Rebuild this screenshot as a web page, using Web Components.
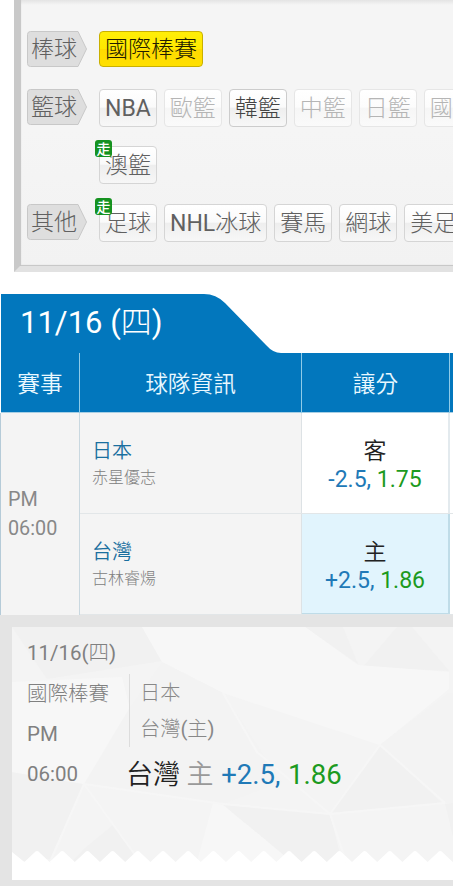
<!DOCTYPE html>
<html lang="zh-Hant">
<head>
<meta charset="utf-8">
<meta name="viewport" content="width=device-width, initial-scale=1">
<title>國際棒賽</title>
<style>
    html, body {
        margin: 0;
        background: #fff;
    }
    body {
        width: 453px;
        height: 886px;
        overflow: hidden;
        font-family: Roboto, "Noto Sans CJK TC", sans-serif;
        color: #777;
    }
    b {
        font-weight: 400;
    }
</style>
</head>
<body>
<sport-panel>
    <sport-row label="棒球">
        <sport-chip active>國際棒賽</sport-chip>
    </sport-row>
    <sport-row label="籃球">
        <sport-chip><b>NBA</b></sport-chip>
        <sport-chip disabled>歐籃</sport-chip>
        <sport-chip dark>韓籃</sport-chip>
        <sport-chip disabled>中籃</sport-chip>
        <sport-chip disabled>日籃</sport-chip>
        <sport-chip disabled>國籃</sport-chip>
    </sport-row>
    <sport-row>
        <sport-chip live>澳籃</sport-chip>
    </sport-row>
    <sport-row label="其他">
        <sport-chip live>足球</sport-chip>
        <sport-chip><b>NHL</b>冰球</sport-chip>
        <sport-chip>賽馬</sport-chip>
        <sport-chip>網球</sport-chip>
        <sport-chip>美足</sport-chip>
    </sport-row>
</sport-panel>

<odds-table>
    <span slot="day"><b>11/16 (</b>四<b>)</b></span>
    <span slot="time">PM</span>
    <span slot="time">06:00</span>
    <team-row team="日本" pitcher="赤星優志" side="客" spread="-2.5," odds="1.75"></team-row>
    <team-row team="台灣" pitcher="古林睿煬" side="主" spread="+2.5," odds="1.86" picked></team-row>
</odds-table>

<bet-slip>
    <span slot="date"><b>11/16(</b>四<b>)</b></span>
    <span slot="league">國際棒賽</span>
    <span slot="half"><b>PM</b></span>
    <span slot="hour"><b>06:00</b></span>
    <span slot="away">日本</span>
    <span slot="home">台灣<b>(</b>主<b>)</b></span>
    <bet-pick slot="pick" team="台灣" side="主" spread="+2.5," odds="1.86"></bet-pick>
</bet-slip>

<template id="sport-panel">
    <style>
        :host {
            display: block;
            box-sizing: border-box;
            width: 439px;
            height: 272px;
            margin-left: 14px;
            padding: 31px 0 0 7px;
            overflow: hidden;
            border: 6px solid #c9c9c9;
            border-top: 0;
            border-right: 0;
            border-bottom-color: #e2e2e2;
            background: linear-gradient(#e4e4e4, #f5f5f5 5px, #f5f5f5 130px, #f2f2f2);
            box-shadow: inset 1px -1px 1px #c4c4c4;
        }
    </style>
    <slot></slot>
</template>

<template id="sport-row">
    <style>
        :host {
            display: flex;
            height: 57.7px;
        }
        .label {
            flex: none;
            width: 60px;
            height: 36px;
            margin-right: 12px;
        }
        .tag {
            display: grid;
        }
        .tag > * {
            grid-area: 1 / 1;
        }
        .tag span {
            padding-left: 4px;
            font-size: 23px;
            line-height: 38px;
            font-weight: 300;
            color: #606060;
        }
        .chips {
            display: flex;
            gap: 7px;
        }
    </style>
    <div class="label"></div>
    <div class="chips"><slot></slot></div>
</template>

<template id="sport-chip">
    <style>
        :host {
            display: block;
            position: relative;
            flex: none;
            box-sizing: border-box;
            height: 38px;
            padding: 0 5px;
            border: 1px solid #d5d5d5;
            border-radius: 4px;
            background: linear-gradient(#fff, #fafafa 48%, #eee 50%, #f7f7f7);
            font-size: 23px;
            line-height: 38px;
            font-weight: 300;
            color: #606060;
            white-space: nowrap;
        }
        :host([dark]) {
            border-color: #ccc;
            color: #444;
        }
        :host([disabled]) {
            border-color: #e6e6e6;
            background: linear-gradient(#fff, #fcfcfc 48%, #f6f6f6 50%, #fafafa);
            color: #b5b5b5;
        }
        :host([active]) {
            height: 36px;
            border-color: #c9b000;
            line-height: 36px;
            background: linear-gradient(#ffee08, #ffe800 49%, #ffda00 51%, #ffe000);
            color: #221c00;
        }
        i {
            display: none;
            position: absolute;
            left: -5px;
            top: -7px;
            width: 17px;
            height: 17px;
            border-radius: 3px;
            background: #159220;
            color: #fff;
            font: 500 14px/17px "Noto Sans CJK TC", sans-serif;
            text-align: center;
        }
        :host([live]) i {
            display: block;
        }
    </style>
    <slot></slot><i></i>
</template>

<template id="odds-table">
    <style>
        :host {
            display: block;
            width: 452px;
            margin: 22px 0 0 1px;
        }
        .tab {
            display: grid;
            height: 59px;
        }
        .tab > * {
            grid-area: 1 / 1;
        }
        .day {
            padding-left: 19px;
            color: #fff;
            font-size: 31px;
            line-height: 57px;
            font-weight: 300;
        }
        .head {
            display: grid;
            grid-template-columns: 79px 222px 148px 1fr;
            height: 59px;
            background: #0277bd;
            border-bottom: 1px solid #a8cfe4;
            color: #e9f8ff;
            font-size: 22.7px;
            line-height: 64px;
            text-align: center;
        }
        .head b {
            font-weight: 350;
            border-right: 1px solid #8fcbe8;
        }
        .body {
            display: flex;
            height: 202px;
        }
        .time {
            display: flex;
            flex-direction: column;
            justify-content: center;
            box-sizing: border-box;
            width: 79px;
            padding-left: 7px;
            border-right: 1px solid #c9d8e0;
            background: #f4f4f4;
            box-shadow: -1px 0 #b5cbd8;
            color: #888;
            font-size: 19.8px;
            line-height: 29px;
        }
        .rows {
            flex: 1;
        }
    </style>
    <div class="tab">
        <svg width="300" height="59"><path d="M0 0H203Q215 0 224 9L265 51Q272 59 280 59H0Z" fill="#0277bd"/></svg>
        <div class="day"><slot name="day"></slot></div>
    </div>
    <div class="head"><b>賽事</b><b>球隊資訊</b><b>讓分</b><span></span></div>
    <div class="body">
        <div class="time"><slot name="time"></slot></div>
        <div class="rows"><slot></slot></div>
    </div>
</template>

<template id="team-row">
    <style>
        :host {
            display: flex;
            box-sizing: border-box;
            height: 101px;
            border-bottom: 1px solid #e2e6e8;
        }
        .team {
            box-sizing: border-box;
            width: 222px;
            padding: 23px 0 0 12px;
            border-right: 1px solid #dde2e5;
            background: #f4f4f4;
            font-weight: 350;
        }
        .name {
            color: #1a6f9f;
            font-size: 20px;
            line-height: 30px;
        }
        .pitcher {
            color: #808080;
            font-size: 16px;
            line-height: 24px;
            font-weight: 300;
        }
        .odds {
            box-sizing: border-box;
            width: 148px;
            padding-top: 25px;
            border-right: 2px solid #e3eaee;
            background: #fff;
            font-size: 23px;
            line-height: 28px;
            text-align: center;
        }
        :host([picked]) .odds {
            border-right-color: #bfdce8;
            border-bottom: 1px solid #bfdce8;
            background: #e1f4fd;
        }
        .side {
            color: #222;
            font-weight: 350;
        }
        .spread {
            color: #2079b7;
        }
        .price {
            color: #1c9a20;
        }
    </style>
    <div class="team"><div class="name"></div><div class="pitcher"></div></div>
    <div class="odds">
        <div class="side"></div>
        <div><span class="spread"></span> <span class="price"></span></div>
    </div>
</template>

<template id="bet-slip">
    <style>
        :host {
            display: block;
            box-sizing: border-box;
            width: 453px;
            height: 271px;
            padding: 12px 0 6px 12px;
            overflow: hidden;
            background: #e4e4e4;
        }
        .paper {
            display: grid;
            grid-template-columns: 441px;
            height: 253px;
            background: #fff;
        }
        .paper > * {
            grid-area: 1 / 1;
        }
        svg {
            width: 441px;
            height: 253px;
        }
        .text {
            padding: 11px 0 0 15px;
            color: #808080;
            font-size: 20.5px;
            font-weight: 300;
        }
        .date {
            height: 36px;
            line-height: 30px;
        }
        .cols {
            display: flex;
            height: 80px;
        }
        .left {
            box-sizing: border-box;
            width: 103px;
            height: 73px;
            border-right: 1px solid #dcdcdc;
            line-height: 40px;
        }
        .left ::slotted(span) {
            display: block;
        }
        .teams {
            padding: 1px 0 0 10px;
            color: #888;
            font-size: 20.2px;
            line-height: 36px;
        }
        .teams ::slotted(span) {
            display: block;
        }
        .last {
            display: flex;
            line-height: 40px;
        }
        .hour {
            width: 99px;
        }
    </style>
    <div class="paper">
        <svg>
            <rect width="441" height="235" fill="#f4f4f4"/>
            <g fill="#f1f1f1">
                <path d="M0 0H130L150 34L35 52Z"/>
                <path d="M293 0H331L346 37Z"/>
                <path d="M351 40L385 0H400L437 44Z"/>
                <path d="M0 145L72 157L38 232L0 235Z"/>
                <path d="M211 178L318 187L330 235H280Z"/>
                <path d="M318 186L368 118L430 176Z"/>
                <path d="M72 222L101 198L125 232V235H60Z"/>
                <path d="M433 177L441 176V210Z"/>
            </g>
            <g fill="#f7f7f7">
                <path d="M130 0H293L346 38L437 45V62L368 118L211 66L150 35Z"/>
                <path d="M0 55L110 50L120 90L72 157L0 145Z"/>
                <path d="M201 176L211 178L280 235H185Z"/>
            </g>
            <g fill="#f3f3f3">
                <path d="M150 35L211 66L270 155L211 177L72 157L118 80Z"/>
                <path d="M368 118L437 66H441V176H433Z"/>
            </g>
            <path d="M72 157L211 177L318 187L433 176M318 187L245 125L211 66M318 187L334 235M72 157L38 235M433 176L368 118L318 187M72 157L126 232" fill="none" stroke="#f6f6f6" stroke-width="2"/>
            <path class="teeth" fill="#fff"/>
        </svg>
        <div class="text">
            <div class="date"><slot name="date"></slot></div>
            <div class="cols">
                <div class="left"><slot name="league"></slot><slot name="half"></slot></div>
                <div class="teams"><slot name="away"></slot><slot name="home"></slot></div>
            </div>
            <div class="last">
                <div class="hour"><slot name="hour"></slot></div>
                <slot name="pick"></slot>
            </div>
        </div>
    </div>
</template>

<template id="bet-pick">
    <style>
        :host {
            display: block;
            color: #222;
            font-size: 27px;
            font-weight: 350;
            line-height: 42px;
            white-space: nowrap;
        }
        .side {
            color: #999;
        }
        .spread, .price {
            font-size: 27.5px;
            font-weight: 400;
        }
        .spread {
            margin-left: 1px;
            color: #2079b7;
        }
        .price {
            margin-left: 1px;
            color: #1c9a20;
        }
    </style>
    <span class="team"></span> <span class="side"></span> <span class="spread"></span> <span class="price"></span>
</template>

<script>
function attach(el, id) {
    const shadow = el.attachShadow({mode: 'open'})
    shadow.appendChild(document.getElementById(id).content.cloneNode(true))
    return shadow
}

// copies attributes into the elements with the given class names
function fill(el, shadow, map) {
    for (const name in map) {
        shadow.querySelector('.' + map[name]).textContent = el.getAttribute(name)
    }
}

class SportPanel extends HTMLElement {
    constructor() {
        super();
        attach(this, 'sport-panel')
    }
}

class SportRow extends HTMLElement {
    constructor() {
        super();
        const shadow = attach(this, 'sport-row')
        const label = this.getAttribute('label')
        if (label) {
            const box = shadow.querySelector('.label')
            box.classList.add('tag')
            box.innerHTML = `
                <svg width="60" height="36">
                    <path d="M3.5 .5H51L59.5 18L51 35.5H3.5Q.5 35.5 .5 32.5V3.5Q.5 .5 3.5 .5Z" fill="#dedede" stroke="#c8c8c8"/>
                </svg>
                <span>${label}</span>`
        }
    }
}

class SportChip extends HTMLElement {
    constructor() {
        super();
        const shadow = attach(this, 'sport-chip')
        if (this.hasAttribute('live')) shadow.querySelector('i').textContent = '走'
    }
}

class OddsTable extends HTMLElement {
    constructor() {
        super();
        attach(this, 'odds-table')
    }
}

class TeamRow extends HTMLElement {
    constructor() {
        super();
        fill(this, attach(this, 'team-row'), {team: 'name', pitcher: 'pitcher', side: 'side', spread: 'spread', odds: 'price'})
    }
}

class BetSlip extends HTMLElement {
    constructor() {
        super();
        const shadow = attach(this, 'bet-slip')
        // torn edge of the paper
        let d = 'M0 235V225L12.4 235'
        for (let x = 12.4; x < 441; x += 25.2) {
            d += `L${x + 9.6} 226Q${x + 12.6} 222 ${x + 15.6} 226L${x + 25.2} 235`
        }
        shadow.querySelector('.teeth').setAttribute('d', d + 'Z')
    }
}

class BetPick extends HTMLElement {
    constructor() {
        super();
        fill(this, attach(this, 'bet-pick'), {team: 'team', side: 'side', spread: 'spread', odds: 'price'})
    }
}

window.customElements.define('sport-panel', SportPanel)
window.customElements.define('sport-row', SportRow)
window.customElements.define('sport-chip', SportChip)
window.customElements.define('odds-table', OddsTable)
window.customElements.define('team-row', TeamRow)
window.customElements.define('bet-slip', BetSlip)
window.customElements.define('bet-pick', BetPick)
</script>
</body>
</html>
